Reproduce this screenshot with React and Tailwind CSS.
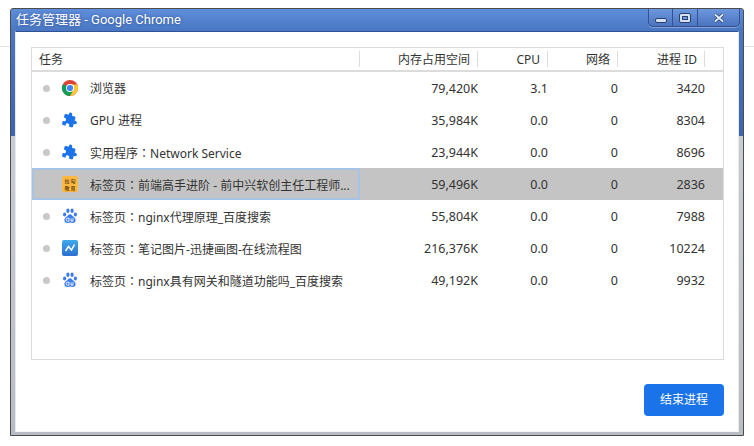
const FONT = "font-['Noto_Sans','Noto_Sans_CJK_SC',sans-serif]";
const NUM_CELL = "pt-[2px] text-right text-[12.5px] leading-[30px]";

const rows = [
  { icon: "chrome", name: "浏览器", mem: "79,420K", cpu: "3.1", net: "0", pid: "3420" },
  { icon: "puzzle", name: "GPU 进程", mem: "35,984K", cpu: "0.0", net: "0", pid: "8304" },
  { icon: "puzzle", name: "实用程序：Network Service", mem: "23,944K", cpu: "0.0", net: "0", pid: "8696" },
  { icon: "lagou", name: "标签页：前端高手进阶 - 前中兴软创主任工程师...", mem: "59,496K", cpu: "0.0", net: "0", pid: "2836", selected: true },
  { icon: "baidu", name: "标签页：nginx代理原理_百度搜索", mem: "55,804K", cpu: "0.0", net: "0", pid: "7988" },
  { icon: "chart", name: "标签页：笔记图片-迅捷画图-在线流程图", mem: "216,376K", cpu: "0.0", net: "0", pid: "10224" },
  { icon: "baidu", name: "标签页：nginx具有网关和隧道功能吗_百度搜索", mem: "49,192K", cpu: "0.0", net: "0", pid: "9932" },
];

function ChromeIcon() {
  return (
    <svg width="16" height="16" viewBox="0 0 16 16">
      <circle cx="8" cy="8" r="8" fill="#db4437" />
      <path d="M8 8 L1.07 4 A8 8 0 0 0 8 16 L11.46 10 Z" fill="#0f9d58" />
      <path d="M8 4.5 H15.2 A8 8 0 0 1 8 16 L11.46 10 Z" fill="#fcc934" />
      <circle cx="8" cy="8" r="4" fill="#fff" />
      <circle cx="8" cy="8" r="3.1" fill="#4285f4" />
    </svg>
  );
}

function PuzzleIcon() {
  return (
    <svg width="16" height="16" viewBox="0 0 24 24" fill="#1a73e8">
      <g transform="rotate(16 12 12)">
        <path d="M20.5 11H19V7c0-1.1-.9-2-2-2h-4V3.5C13 2.12 11.88 1 10.5 1S8 2.12 8 3.5V5H4c-1.1 0-1.99.9-1.99 2v3.8H3.5c1.49 0 2.7 1.21 2.7 2.7s-1.21 2.7-2.7 2.7H2V20c0 1.1.9 2 2 2h3.8v-1.5c0-1.49 1.21-2.7 2.7-2.7 1.49 0 2.7 1.21 2.7 2.7V22H17c1.1 0 2-.9 2-2v-4h1.5c1.38 0 2.5-1.12 2.5-2.5S21.88 11 20.5 11z" />
      </g>
    </svg>
  );
}

function BaiduIcon() {
  return (
    <svg width="16" height="16" viewBox="0 0 16 16" fill="#3a7bf0">
      <ellipse cx="2.6" cy="6.4" rx="1.6" ry="2" />
      <ellipse cx="5.9" cy="2.8" rx="1.6" ry="2.2" />
      <ellipse cx="10.1" cy="2.8" rx="1.6" ry="2.2" />
      <ellipse cx="13.4" cy="6.4" rx="1.6" ry="2" />
      <path d="M8 6.2c-1.6 0-2.2 1.6-3.4 2.6C3.4 9.8 2 10.8 2.400 12.800c.4 1.800 2 2.400 3.400 2.200 1-.1 1.500-.4 2.200-.4s1.200.3 2.200.4c1.400.2 3-.4 3.400-2.200.4-2-1-3-2.200-4C10.200 7.800 9.600 6.200 8 6.200z" />
      <path d="M5.600 10.200h1.400v3h-1.400a1.500 1.500 0 0 1 0-3zM9 10.200v3h2v-3" fill="none" stroke="#fff" strokeWidth="0.9" />
    </svg>
  );
}

function ChartIcon() {
  return (
    <svg width="16" height="16" viewBox="0 0 16 16">
      <defs>
        <linearGradient id="chartBg" x1="0" y1="0" x2="0" y2="1">
          <stop offset="0" stopColor="#3fa9ea" />
          <stop offset="1" stopColor="#2c6fd0" />
        </linearGradient>
      </defs>
      <rect width="16" height="16" rx="2" fill="url(#chartBg)" />
      <path d="M3.500 11 L6.500 6.500 L9.500 10 L12.500 4.500" fill="none" stroke="#fff" strokeWidth="1.500" />
    </svg>
  );
}

function LagouIcon() {
  return (
    <div className="grid h-4 w-4 shrink-0 grid-cols-2 place-items-center rounded-[2px] bg-[#fbb941] px-[2px] py-[1px] text-[5px] leading-[6px] font-bold text-[#6b4a12]">
      <span>拉</span>
      <span>勾</span>
      <span>教</span>
      <span>育</span>
    </div>
  );
}

const icons = {
  chrome: ChromeIcon,
  puzzle: PuzzleIcon,
  baidu: BaiduIcon,
  chart: ChartIcon,
  lagou: LagouIcon,
};

// the reference centres the full-width colon in its cell, which the TC face does
function RowName({ name }) {
  const parts = name.split("：");
  if (parts.length === 1) {
    return <span className="ml-3 whitespace-nowrap pt-[2px] leading-[26px]">{name}</span>;
  }
  return (
    <span className="ml-3 whitespace-nowrap pt-[2px] leading-[26px]">
      {parts[0]}
      <span className="font-['Noto_Sans_CJK_TC']">：</span>
      {parts[1]}
    </span>
  );
}

function HeaderCell({ children }) {
  return (
    <div className="flex h-4 items-center justify-end border-r border-[#dcdcdc] pt-[2px] pr-[7px]">
      {children}
    </div>
  );
}

function Row({ row }) {
  const Icon = icons[row.icon];
  return (
    <div className={`grid h-8 grid-cols-[328px_118px_70px_70px_87px] items-center text-[12px] text-[#333] ${row.selected ? "bg-[#c4c4c4]" : ""}`}>
      <div className={row.selected ? "flex h-8 items-center rounded-[2px] border-2 border-[#a6c3e8] pl-[9px]" : "flex h-8 items-center pl-[11px]"}>
        <div className="flex w-[19px] shrink-0">
          {!row.selected && <span className="h-[7px] w-[7px] rounded-full bg-[#c8c8c8]" />}
        </div>
        <Icon />
        <RowName name={row.name} />
      </div>
      <div className={NUM_CELL}>{row.mem}</div>
      <div className={NUM_CELL}>{row.cpu}</div>
      <div className={NUM_CELL}>{row.net}</div>
      <div className={NUM_CELL}>{row.pid}</div>
    </div>
  );
}

function WindowControls() {
  return (
    <div className="mr-[-1px] flex h-[18px] w-[92px] divide-x divide-[#33528f] rounded-b-[5px] border-x border-b border-[#33528f] bg-[linear-gradient(to_bottom,#6d97dd,#4a74bf)] shadow-[0_1px_0_rgba(255,255,255,0.3)]">
      <div className="flex w-[24px] items-end justify-center pb-[3px]">
        <span className="h-[5px] w-3 rounded-[2px] border border-[#2b416f] bg-[#d5e1f3]" />
      </div>
      <div className="flex w-[25px] items-center justify-center">
        <span className="flex h-[10px] w-3 items-center justify-center rounded-[2px] border border-[#2b416f] bg-[#d5e1f3]">
          <span className="h-[4px] w-[6px] border border-[#2b416f] bg-[#6d97dd]" />
        </span>
      </div>
      <div className="flex flex-1 items-center justify-center">
        <svg width="12" height="10" viewBox="0 0 12 10">
          <path d="M2 1.500 L10 8.500 M10 1.500 L2 8.500" stroke="#2b416f" strokeWidth="3.400" />
          <path d="M2 1.500 L10 8.500 M10 1.500 L2 8.500" stroke="#e4ecf8" strokeWidth="1.800" />
        </svg>
      </div>
    </div>
  );
}

export default function App() {
  return (
    <div className={`relative h-[446px] w-[754px] overflow-hidden bg-white pt-2 pl-[10px] ${FONT}`}>
      <div className="absolute top-[46px] left-0 h-px w-full bg-[#e2e2e2]" />

      <div className="relative flex h-[428px] w-[734px] flex-col rounded-t-[3px] border border-[#4d4d4d] bg-[linear-gradient(to_bottom,#5f8edb_0,#4a76c2_22px,#3d64ae_127px,#c9ccd1_127px,#b9bcc2_100%)] px-1 pb-[3px]">
        <div className="flex h-[22px] shrink-0 items-start justify-between">
          <span className="pt-[1px] pl-[1px] font-['Roboto','Noto_Sans_CJK_SC',sans-serif] text-[13px] leading-[20px] text-white [text-shadow:0_0_3px_rgba(30,50,100,0.6)]">
            任务管理器 - Google Chrome
          </span>
          <WindowControls />
        </div>

        <div className="flex flex-1 flex-col border border-[#2f5496] border-b-[#f5f5f5] border-x-[#e8e8e8] bg-white pt-[15px] pr-[14px] pl-[15px]">
          <div className="h-[313px] border border-[#dcdcdc]">
            <div className="grid h-6 grid-cols-[328px_118px_70px_70px_87px] items-center border-b-2 border-[#dcdcdc] text-[12px] text-[#333]">
              <div className="flex h-4 items-center border-r border-[#dcdcdc] pt-[2px] pl-[7px]">任务</div>
              <HeaderCell>内存占用空间</HeaderCell>
              <HeaderCell>CPU</HeaderCell>
              <HeaderCell>网络</HeaderCell>
              <HeaderCell>进程 ID</HeaderCell>
            </div>
            {rows.map((row) => (
              <Row key={row.pid} row={row} />
            ))}
          </div>
          <div className="mt-6 flex justify-end">
            <button className="h-8 w-20 rounded-[4px] bg-[#1a73e8] text-[12px] text-white">结束进程</button>
          </div>
        </div>
      </div>
    </div>
  );
}
